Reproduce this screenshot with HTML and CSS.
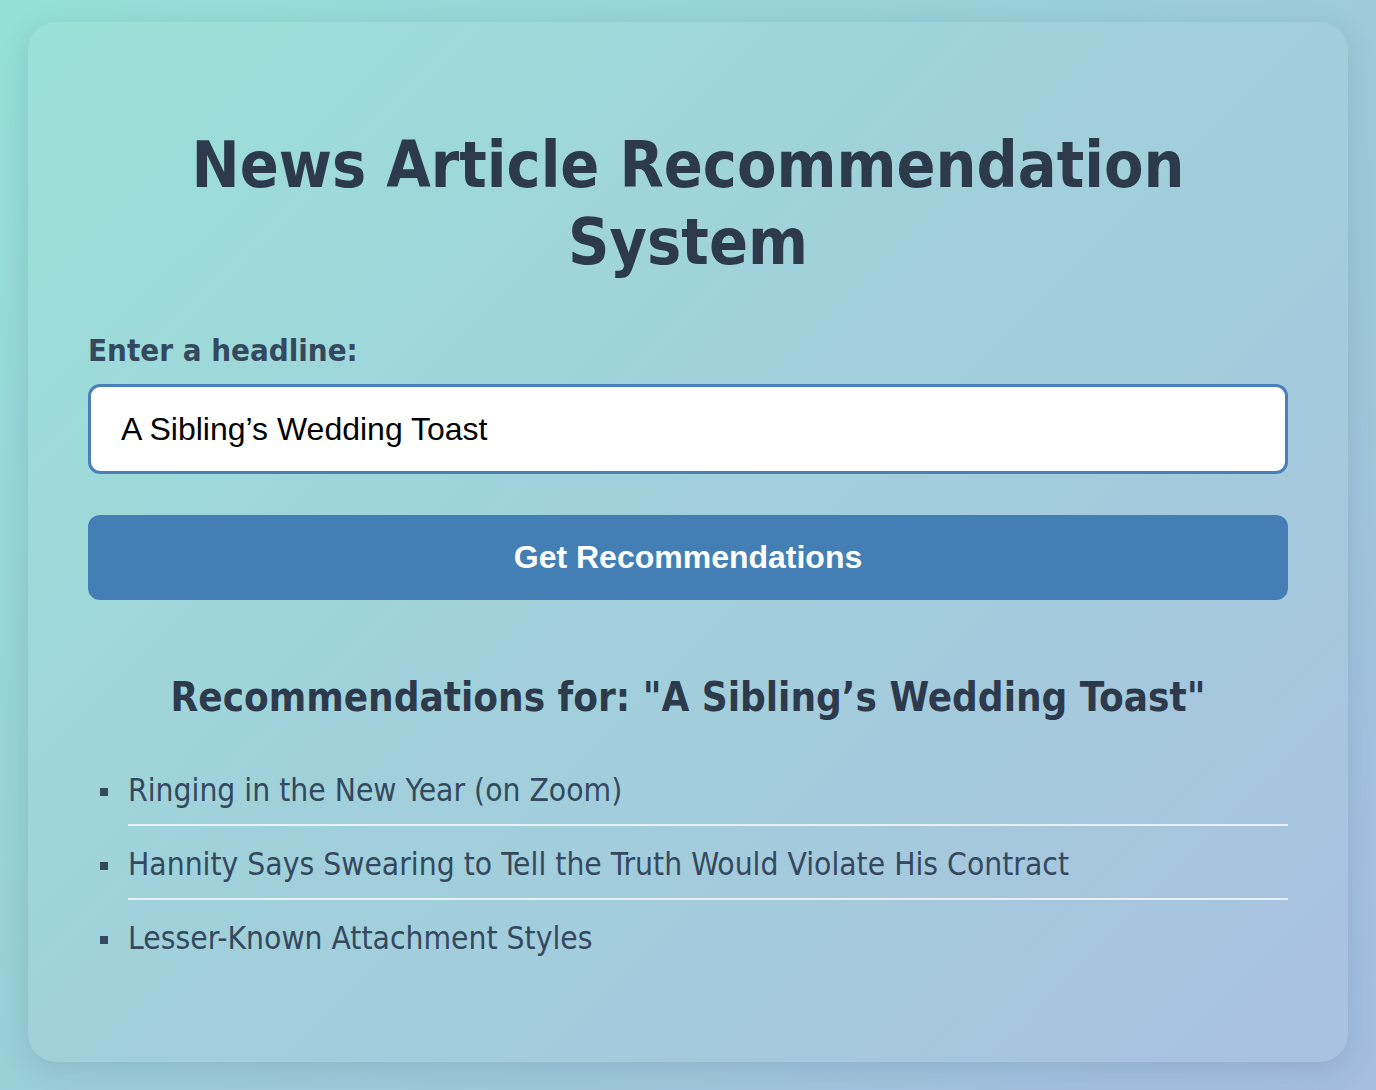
FILE: index.html
```html
<!DOCTYPE html>
<html lang="en">
<head>
<meta charset="utf-8">
<title>News Article Recommendation System</title>
<link rel="stylesheet" href="styles.css">
</head>
<body>
<main class="card">
  <h1 class="title">News Article Recommendation System</h1>
  <label class="label" for="headline">Enter a headline:</label>
  <input class="input" id="headline" type="text" value="A Sibling’s Wedding Toast">
  <button class="button" type="button">Get Recommendations</button>
  <h2 class="subtitle">Recommendations for: "A Sibling’s Wedding Toast"</h2>
  <ul class="list">
    <li class="item">Ringing in the New Year (on Zoom)</li>
    <li class="item">Hannity Says Swearing to Tell the Truth Would Violate His Contract</li>
    <li class="item">Lesser-Known Attachment Styles</li>
  </ul>
</main>
</body>
</html>
```

FILE: styles.css
```css
html, body {
  margin: 0;
  padding: 0;
}
body {
  min-height: 1090px;
  background: linear-gradient(135deg, #94e0d6 0%, #9ccdd9 50%, #a5bddf 100%);
  font-family: "DejaVu Sans Condensed", "DejaVu Sans", sans-serif;
  color: #2e3b4e;
  padding-top: 22px;
  box-sizing: border-box;
}
.card {
  display: flex;
  flex-direction: column;
  width: 1320px;
  height: 1040px;
  margin: 0 auto;
  padding: 60px;
  box-sizing: border-box;
  border-radius: 28px;
  background: rgba(255, 255, 255, 0.06);
  box-shadow: 0 8px 30px rgba(40, 70, 100, 0.14);
}
.title {
  margin: 45px 0 0;
  font-size: 64px;
  line-height: 77px;
  font-weight: bold;
  text-align: center;
  color: #2d3a4c;
}
.label {
  margin-top: 50px;
  font-size: 31px;
  line-height: 38px;
  font-weight: bold;
  color: #34495e;
}
.input {
  margin-top: 15px;
  height: 90px;
  padding: 0 30px;
  box-sizing: border-box;
  border: 3px solid #4a7fba;
  border-radius: 12px;
  background: #fff;
  font-family: "Liberation Sans", Arial, sans-serif;
  font-size: 32px;
  color: #000;
  outline: none;
}
.button {
  margin-top: 41px;
  height: 85px;
  border: none;
  border-radius: 12px;
  background: #437fb5;
  color: #fff;
  font-family: "Liberation Sans", Arial, sans-serif;
  font-weight: bold;
  font-size: 32px;
}
.subtitle {
  margin: 73px 0 0;
  font-size: 40px;
  line-height: 48px;
  font-weight: bold;
  text-align: center;
  color: #2d3a4c;
}
.list {
  margin: 31px 0 0;
  padding: 0 0 0 40px;
  list-style: none;
}
.item {
  padding: 19px 0 15px;
  font-size: 31.5px;
  line-height: 38px;
  color: #34495e;
  border-bottom: 2px solid rgba(255, 255, 255, 0.75);
}
.item:last-child {
  border-bottom: none;
}
.item::before {
  content: "";
  display: inline-block;
  width: 8px;
  height: 8px;
  margin-left: -28px;
  margin-right: 20px;
  background: #34495e;
  vertical-align: middle;
}
```
